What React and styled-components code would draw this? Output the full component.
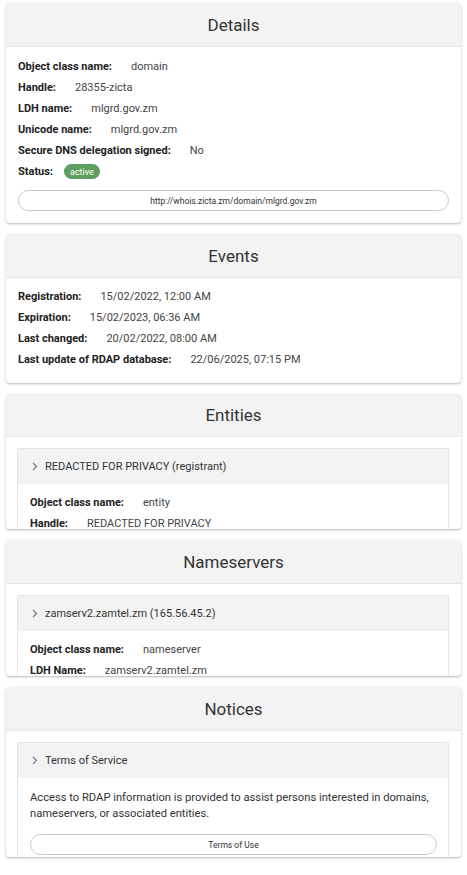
import React from 'react';
import styled, { createGlobalStyle } from 'styled-components';

const GlobalStyle = createGlobalStyle`
  body {
    margin: 0;
    background: #fff;
    font-family: Roboto, "Liberation Sans", Arial, sans-serif;
    color: #333;
  }
`;

const Page = styled.main`
  display: flex;
  flex-direction: column;
  gap: 11px;
  padding: 3px 6px 12px;
`;

const Card = styled.section`
  background: #fff;
  border-radius: 4px;
  box-shadow: 0 1px 3px rgba(0, 0, 0, 0.22), 0 1px 1px rgba(0, 0, 0, 0.08);
  overflow: hidden;
  height: ${(p) => (p.$height ? `${p.$height}px` : 'auto')};
`;

const CardHeader = styled.h2`
  margin: 0;
  height: ${(p) => p.$h || 43}px;
  display: flex;
  align-items: center;
  justify-content: center;
  background: #f3f3f3;
  border-bottom: 1px solid #e6e6e6;
  font-size: 17px;
  font-weight: 400;
  color: #333;
`;

const CardBody = styled.div`
  padding: ${(p) => p.$pad || '9px 12px 12px'};
`;

const Row = styled.div`
  display: flex;
  align-items: center;
  height: 21px;
  font-size: 11px;
  white-space: nowrap;
`;

const Label = styled.span`
  font-weight: 700;
  color: #222;
  margin-right: 19px;
`;

const Value = styled.span`
  color: #444;
`;

const Chip = styled.span`
  display: inline-flex;
  align-items: center;
  height: 15px;
  padding: 0 6px;
  border-radius: 8px;
  background: #5c9f5e;
  color: #fff;
  font-size: 9px;
  margin-left: -8px;
`;

const PillButton = styled.button`
  display: block;
  width: calc(100% - ${(p) => p.$inset || 0}px);
  height: 21px;
  margin-top: ${(p) => p.$top || 8}px;
  border: 1px solid #c9c9c9;
  border-radius: 11px;
  background: #fff;
  color: #333;
  font-family: inherit;
  font-size: 8.5px;
  cursor: pointer;
`;

const Panel = styled.div`
  border: 1px solid #e4e4e4;
  border-bottom: none;
  border-radius: 2px 2px 0 0;
`;

const PanelHeader = styled.div`
  display: flex;
  align-items: center;
  gap: 7px;
  height: 35px;
  padding: 0 14px;
  background: #f3f3f3;
  font-size: 11px;
  color: #333;
`;

const PanelBody = styled.div`
  padding: ${(p) => p.$pad || '8px 12px 12px'};
`;

const Paragraph = styled.p`
  margin: 0;
  font-size: 11.2px;
  line-height: 16px;
  color: #333;
`;

const Chevron = () => (
  <svg width="6" height="9" viewBox="0 0 6 9" fill="none">
    <path d="M1 1l3.5 3.5L1 8" stroke="#777" strokeWidth="1.1" />
  </svg>
);

const Field = ({ label, children }) => (
  <Row>
    <Label>{label}</Label>
    <Value>{children}</Value>
  </Row>
);

const App = () => (
  <>
    <GlobalStyle />
    <Page>
      <Card>
        <CardHeader>Details</CardHeader>
        <CardBody>
          <Field label="Object class name:">domain</Field>
          <Field label="Handle:">28355-zicta</Field>
          <Field label="LDH name:">mlgrd.gov.zm</Field>
          <Field label="Unicode name:">mlgrd.gov.zm</Field>
          <Field label="Secure DNS delegation signed:">No</Field>
          <Row>
            <Label>Status:</Label>
            <Chip>active</Chip>
          </Row>
          <PillButton>http://whois.zicta.zm/domain/mlgrd.gov.zm</PillButton>
        </CardBody>
      </Card>

      <Card>
        <CardHeader>Events</CardHeader>
        <CardBody $pad="8px 12px 13px">
          <Field label="Registration:">15/02/2022, 12:00 AM</Field>
          <Field label="Expiration:">15/02/2023, 06:36 AM</Field>
          <Field label="Last changed:">20/02/2022, 08:00 AM</Field>
          <Field label="Last update of RDAP database:">22/06/2025, 07:15 PM</Field>
        </CardBody>
      </Card>

      <Card $height={135}>
        <CardHeader $h={42}>Entities</CardHeader>
        <CardBody $pad="11px 12px 0 11px">
          <Panel>
            <PanelHeader>
              <Chevron />
              REDACTED FOR PRIVACY (registrant)
            </PanelHeader>
            <PanelBody>
              <Field label="Object class name:">entity</Field>
              <Field label="Handle:">REDACTED FOR PRIVACY</Field>
            </PanelBody>
          </Panel>
        </CardBody>
      </Card>

      <Card $height={136}>
        <CardHeader>Nameservers</CardHeader>
        <CardBody $pad="11px 12px 0 11px">
          <Panel>
            <PanelHeader>
              <Chevron />
              zamserv2.zamtel.zm (165.56.45.2)
            </PanelHeader>
            <PanelBody>
              <Field label="Object class name:">nameserver</Field>
              <Field label="LDH Name:">zamserv2.zamtel.zm</Field>
            </PanelBody>
          </Panel>
        </CardBody>
      </Card>

      <Card $height={170}>
        <CardHeader>Notices</CardHeader>
        <CardBody $pad="11px 12px 0 11px">
          <Panel>
            <PanelHeader>
              <Chevron />
              Terms of Service
            </PanelHeader>
            <PanelBody $pad="12px 8px 12px 12px">
              <Paragraph>
                Access to RDAP information is provided to assist persons interested in domains,
                nameservers, or associated entities.
              </Paragraph>
              <PillButton $top={12} $inset={3}>Terms of Use</PillButton>
            </PanelBody>
          </Panel>
        </CardBody>
      </Card>
    </Page>
  </>
);

export default App;
